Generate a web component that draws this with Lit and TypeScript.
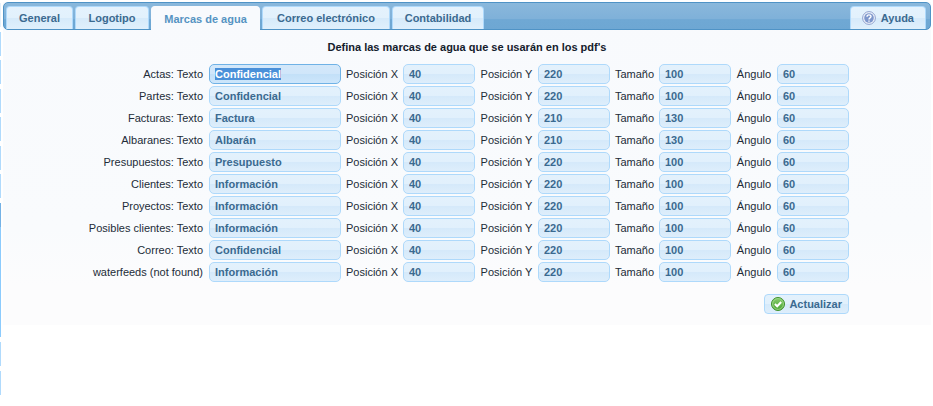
import { LitElement, html, css } from "lit";
import { customElement, query } from "lit/decorators.js";

interface Tab {
  id: string;
  label: string;
}

interface Watermark {
  name: string;
  text: string;
  x: number;
  y: number;
  size: number;
  angle: number;
}

const TABS: Tab[] = [
  { id: "general", label: "General" },
  { id: "logo", label: "Logotipo" },
  { id: "water", label: "Marcas de agua" },
  { id: "mail", label: "Correo electrónico" },
  { id: "accounts", label: "Contabilidad" },
];

const row = (name: string, text: string, y = 220, size = 100): Watermark => ({
  name, text, x: 40, y, size, angle: 60,
});

const ROWS: Watermark[] = [
  row("Actas: Texto", "Confidencial"),
  row("Partes: Texto", "Confidencial"),
  row("Facturas: Texto", "Factura", 210, 130),
  row("Albaranes: Texto", "Albarán", 210, 130),
  row("Presupuestos: Texto", "Presupuesto"),
  row("Clientes: Texto", "Información"),
  row("Proyectos: Texto", "Información"),
  row("Posibles clientes: Texto", "Información"),
  row("Correo: Texto", "Confidencial"),
  row("waterfeeds (not found)", "Información"),
];

@customElement("app-root")
export class AppRoot extends LitElement {
  static styles = css`
    :host {
      display: flex;
      align-items: flex-start;
      background: #fff;
      color: #222c38;
      font: 11px/14px "Liberation Sans", Arial, sans-serif;
    }
    * {
      box-sizing: border-box;
    }
    .rail {
      flex: none;
      width: 1px;
      display: flex;
      flex-direction: column;
      gap: 5px;
      padding-top: 3px;
    }
    .marks {
      display: flex;
      flex-direction: column;
      justify-content: space-between;
      height: 195px;
    }
    .mark {
      height: 24px;
      background: #b0dafc;
    }
    .mark.pale {
      background: #e6f1fa;
    }
    .open {
      background: #8ccbfd;
      height: 134px;
    }
    .open::before {
      content: "";
      display: block;
      height: 24px;
      background: #74b2e6;
    }
    .panel {
      flex: 1;
      min-width: 0;
      margin: 2px 2px 0;
      padding-bottom: 11px;
      background: linear-gradient(#f8fafd, #f9fbfd 70%, #fcfcfd 88%);
    }
    .bar {
      display: grid;
      grid-template-columns: 67px 74px 109px 128px 92px 1fr;
      gap: 2px;
      height: 28px;
      padding: 3px 4px 0 2px;
      border: 1px solid #4f93c6;
      border-radius: 5px;
      background: linear-gradient(#8ab8dc, #7fb1d9 60%, #6fa8d4 64%, #6ea7d3);
    }
    .tab {
      display: flex;
      align-items: center;
      justify-content: center;
      gap: 5px;
      height: 23px;
      padding: 0 11px;
      border: 1px solid #aed9fb;
      border-bottom: 0;
      border-radius: 4px 4px 0 0;
      background: linear-gradient(#e4f2fd, #e2f1fc 50%, #d6eafa 52%, #e0f0fc);
      color: #3b6a90;
      font-weight: bold;
      text-decoration: none;
      white-space: nowrap;
    }
    .tab.on {
      height: 24px;
      border-color: #f8fafd;
      background: #f8fafd;
      color: #5593c2;
    }
    .help {
      justify-self: end;
    }
    .icon {
      flex: none;
      width: 14px;
      height: 14px;
    }
    .title {
      margin: 10px 0;
      font-size: 11px;
      line-height: 14px;
      text-align: center;
      color: #14202c;
    }
    .form {
      width: fit-content;
      margin: 0 auto;
    }
    .fields {
      display: grid;
      grid-template-columns: 120px 132px 54px 72px 55px 72px 41px 72px 38px 72px;
      gap: 2px 4px;
      align-items: center;
      text-align: center;
      white-space: nowrap;
    }
    .name {
      padding-right: 2px;
      text-align: right;
    }
    .box {
      width: 100%;
      height: 20px;
      padding: 0 5px;
      border: 1px solid #aed9fb;
      border-radius: 5px;
      outline: 0;
      background: linear-gradient(#e3f1fc, #e1f0fc 50%, #d5e9fa 52%, #deeefb);
      color: #3b6a90;
      font: bold 11px "Liberation Sans", Arial, sans-serif;
    }
    .box:focus {
      border-color: #6fb2e6;
      background: linear-gradient(#d3e8fa, #d0e6fa 50%, #c3e0f8 52%, #cde6fb);
    }
    .box::selection {
      background: #4a90d9;
      color: #fff;
    }
    .actions {
      display: flex;
      justify-content: flex-end;
      margin-top: 12px;
    }
    .save {
      display: flex;
      align-items: center;
      gap: 4px;
      height: 20px;
      padding: 0 6px;
      border: 1px solid #aed9fb;
      border-radius: 4px;
      background: linear-gradient(#e3f1fc, #e1f0fc 50%, #d5e9fa 52%, #deeefb);
      color: #3b6a90;
      font: bold 11px "Liberation Sans", Arial, sans-serif;
    }
  `;

  @query(".box") first!: HTMLInputElement;

  firstUpdated() {
    this.first.focus();
    this.first.select();
  }

  private field(id: string, label: string, value: string | number, cls = "") {
    return html`<label class=${cls} for=${id}>${label}</label
      ><input class="box" id=${id} type="text" .value=${String(value)} />`;
  }

  render() {
    return html`
      <div class="rail">
        <div class="marks">
          <div class="mark pale"></div>
          ${Array.from({ length: 6 }, () => html`<div class="mark"></div>`)}
        </div>
        <div class="open"></div>
        <div class="mark"></div>
        <div class="mark"></div>
      </div>
      <main class="panel">
        <nav class="bar">
          ${TABS.map((t) => html`<a class="tab ${t.id === "water" ? "on" : ""}" href="#${t.id}">${t.label}</a>`)}
          <a class="tab help" href="#help">
            <svg class="icon" viewBox="0 0 14 14" aria-hidden="true">
              <circle cx="7" cy="7" r="6.4" fill="#f1f4fb" stroke="#8fa2cf" />
              <circle cx="7" cy="7" r="4.8" fill="#7d97cc" />
              <path d="M5 5.7C5 3.3 9 3.3 9 5.6C9 7 7 6.9 7 8.4M7 9.4V10.8" fill="none" stroke="#fff" stroke-width="1.4" />
            </svg>
            Ayuda
          </a>
        </nav>
        <h1 class="title">Defina las marcas de agua que se usarán en los pdf's</h1>
        <form class="form">
          <div class="fields">
            ${ROWS.map(
              (r, i) => html`
                ${this.field(`text${i}`, r.name, r.text, "name")}
                ${this.field(`x${i}`, "Posición X", r.x)}
                ${this.field(`y${i}`, "Posición Y", r.y)}
                ${this.field(`size${i}`, "Tamaño", r.size)}
                ${this.field(`angle${i}`, "Ángulo", r.angle)}
              `
            )}
          </div>
          <div class="actions">
            <button class="save" type="button">
              <svg class="icon" viewBox="0 0 14 14" aria-hidden="true">
                <defs>
                  <linearGradient id="leaf" x1="0" y1="0" x2="0" y2="1">
                    <stop offset="0" stop-color="#86cc6c" />
                    <stop offset="1" stop-color="#4aa332" />
                  </linearGradient>
                </defs>
                <circle cx="7" cy="7" r="6.5" fill="url(#leaf)" stroke="#3f8f2c" />
                <circle cx="7" cy="7" r="5.4" fill="none" stroke="#a5dc90" stroke-width="0.8" />
                <path d="M3.9 7L6.2 9.3L10.2 5" fill="none" stroke="#fff" stroke-width="2" />
              </svg>
              Actualizar
            </button>
          </div>
        </form>
      </main>
    `;
  }
}
